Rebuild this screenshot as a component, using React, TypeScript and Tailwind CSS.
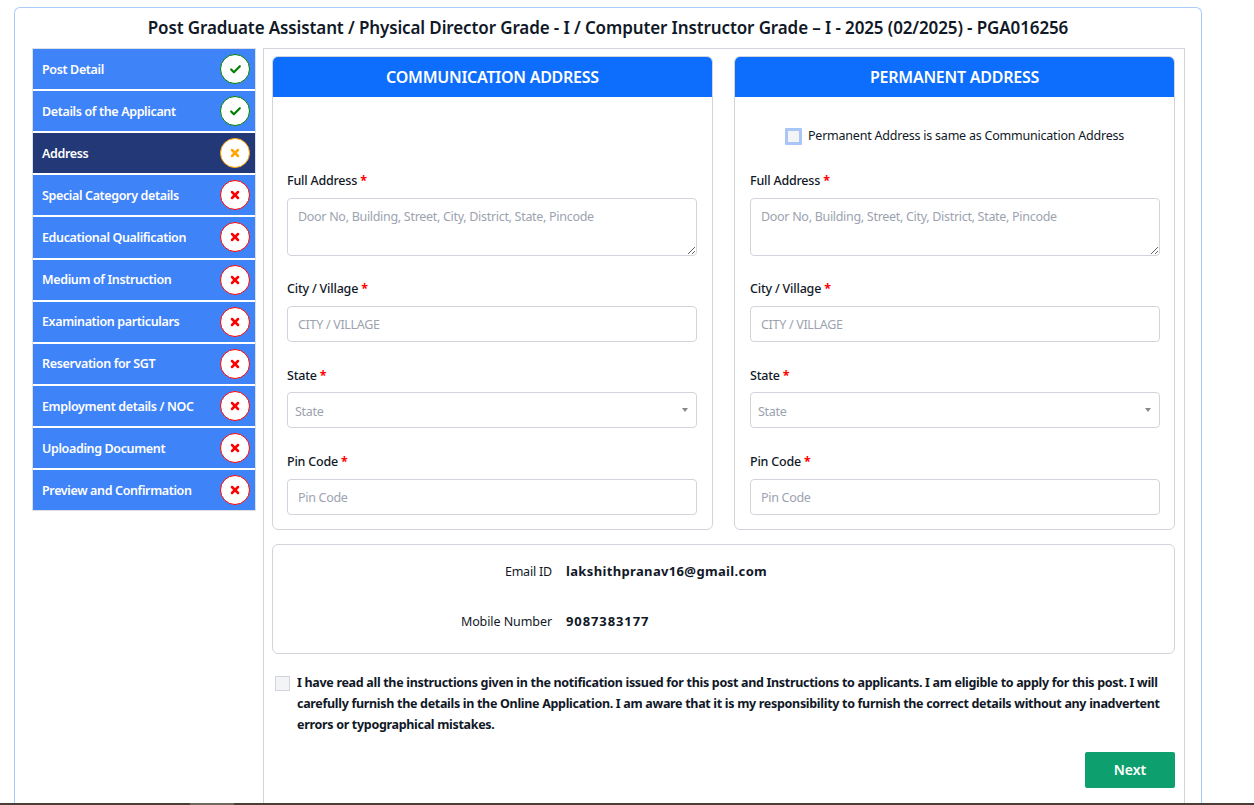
import React from "react";
import { Check, X } from "lucide-react";

const steps: { label: string; state: "done" | "active" | "todo" }[] = [
  { label: "Post Detail", state: "done" },
  { label: "Details of the Applicant", state: "done" },
  { label: "Address", state: "active" },
  { label: "Special Category details", state: "todo" },
  { label: "Educational Qualification", state: "todo" },
  { label: "Medium of Instruction", state: "todo" },
  { label: "Examination particulars", state: "todo" },
  { label: "Reservation for SGT", state: "todo" },
  { label: "Employment details / NOC", state: "todo" },
  { label: "Uploading Document", state: "todo" },
  { label: "Preview and Confirmation", state: "todo" },
];

function Step({ label, state }: { label: string; state: "done" | "active" | "todo" }) {
  return (
    <div className={`flex h-[40.12px] items-center justify-between pl-[9px] pr-[5px] ${state === "active" ? "bg-[#233876]" : "bg-[#3f83f8]"}`}>
      <span className="pt-[2px] text-[12.5px] font-semibold tracking-[-0.36px] text-white">{label}</span>
      {state === "done" && (
        <span className="flex h-[30px] w-[30px] items-center justify-center rounded-full border-[1.5px] border-[#008000] bg-white">
          <Check size={13} strokeWidth={4} className="text-[#008000]" />
        </span>
      )}
      {state === "active" && (
        <span className="flex h-[30px] w-[30px] items-center justify-center rounded-full border-[1.5px] border-[#ffa500] bg-white">
          <X size={12} strokeWidth={5} className="text-[#ffa500]" />
        </span>
      )}
      {state === "todo" && (
        <span className="flex h-[30px] w-[30px] items-center justify-center rounded-full border-[1.5px] border-[#ff0000] bg-white">
          <X size={12} strokeWidth={5} className="text-[#ff0000]" />
        </span>
      )}
    </div>
  );
}

function Label({ text }: { text: string }) {
  return (
    <div className="pt-px text-[12.5px] font-medium leading-[20px] tracking-[-0.2px] text-[#111827]">
      {text} <span className="font-bold text-[#ff0000]">*</span>
    </div>
  );
}

const inputCls =
  "block h-[36px] w-full rounded-[4px] border border-[#d1d5db] bg-white px-[10px] text-[12.5px] tracking-[-0.3px] text-[#111827] outline-none placeholder:text-[#9ca3af]";

function AddressColumn({ title, same }: { title: string; same?: boolean }) {
  return (
    <div className="flex h-[474px] flex-col rounded-[6px] border border-[#d1d5db]">
      <div className="flex h-[40px] items-center justify-center rounded-t-[5px] bg-[#0d6efd] text-[16px] font-semibold tracking-[-0.25px] text-white">
        {title}
      </div>
      <div className="flex h-[73px] items-end justify-center pb-[24px]">
        {same && (
          <div className="flex items-center gap-[6px]">
            <input type="checkbox" className="h-[17px] w-[17px] appearance-none rounded-[1px] border-[3px] border-[#a9c6f7] bg-[#f3f4f6]" />
            <span className="text-[12.5px] leading-[20px] tracking-[-0.22px] text-[#111827]">Permanent Address is same as Communication Address</span>
          </div>
        )}
      </div>
      <div className={`flex flex-col ${same ? "pl-[15px] pr-[14px]" : "pl-[14px] pr-[15px]"}`}>
        <Label text="Full Address" />
        <textarea
          className="mt-[7px] block h-[58px] w-full resize-y rounded-[4px] border border-[#d1d5db] bg-white px-[10px] py-[8px] text-[12.5px] leading-[20px] tracking-[-0.3px] outline-none placeholder:text-[#9ca3af]"
          placeholder="Door No, Building, Street, City, District, State, Pincode"
        />
        <div className="mt-[22px]"><Label text="City / Village" /></div>
        <input className={`mt-[7px] ${inputCls}`} placeholder="CITY / VILLAGE" />
        <div className="mt-[23px]"><Label text="State" /></div>
        <div className="mt-[6px] flex h-[36px] items-center justify-between rounded-[4px] border border-[#d1d5db] bg-white pl-[7px] pr-[8px] text-[12.5px] tracking-[-0.3px] text-[#9ca3af]">
          <span className="pt-[5px]">State</span>
          <svg width="6" height="4" viewBox="0 0 6 4"><path d="M0 0h6L3 4z" fill="#888888" /></svg>
        </div>
        <div className="mt-[23px]"><Label text="Pin Code" /></div>
        <input className={`mt-[7px] ${inputCls}`} placeholder="Pin Code" />
      </div>
    </div>
  );
}

function InfoRow({ label, value, labelSpacing, spacing }: { label: string; value: string; labelSpacing: string; spacing: string }) {
  return (
    <div className="flex h-[20px] items-center">
      <div className={`w-[279px] text-right text-[12.5px] text-[#111827] ${labelSpacing}`}>{label}</div>
      <div className={`ml-[14px] text-[13px] font-bold text-[#111827] ${spacing}`}>{value}</div>
    </div>
  );
}

export default function App() {
  return (
    <div className="flex h-[805px] flex-col overflow-hidden bg-white font-['Noto_Sans','Open_Sans',sans-serif]">
      <div className="flex-1 overflow-hidden pl-[14px] pt-[7px]">
        <div className="h-full w-[1188px] rounded-t-[6px] border-x border-t border-[#a9cbf9]">
          <h1 className="flex h-[40px] items-center justify-center text-[17px] font-semibold tracking-[-0.12px] text-[#111827]">
            Post Graduate Assistant / Physical Director Grade - I / Computer Instructor Grade – I - 2025 (02/2025) - PGA016256
          </h1>
          <div className="flex h-full items-start pl-[17px]">
            <div className="flex w-[224px] flex-col gap-[2px] border border-[#dcdfe6]">
              {steps.map((s) => (
                <Step key={s.label} {...s} />
              ))}
            </div>
            <div className="ml-[7px] h-full w-[922px] border border-[#d1d5db] pl-[8px] pr-[9px] pt-[7px]">
              <div className="grid grid-cols-2 gap-[21px]">
                <AddressColumn title="COMMUNICATION ADDRESS" />
                <AddressColumn title="PERMANENT ADDRESS" same />
              </div>
              <div className="mt-[14px] flex h-[110px] flex-col justify-center gap-[30px] rounded-[6px] border border-[#d1d5db] pb-[4px]">
                <InfoRow label="Email ID" value="lakshithpranav16@gmail.com" labelSpacing="tracking-[-0.2px]" spacing="tracking-[0.35px]" />
                <InfoRow label="Mobile Number" value="9087383177" labelSpacing="tracking-[-0.08px]" spacing="tracking-[0.9px]" />
              </div>
              <div className="mt-[18px] flex items-start pl-[3px]">
                <input type="checkbox" className="mt-[4px] h-[15px] w-[15px] shrink-0 appearance-none border border-[#d1d5db] bg-[#f3f4f6]" />
                <p className="ml-[7px] w-[870px] text-[12.5px] font-bold leading-[21px] tracking-[-0.31px] text-[#111827]">
                  I have read all the instructions given in the notification issued for this post and Instructions to applicants. I am eligible to apply for this post. I will carefully furnish the details in the Online Application. I am aware that it is my responsibility to furnish the correct details without any inadvertent errors or typographical mistakes.
                </p>
              </div>
              <div className="mt-[17px] flex justify-end">
                <button className="h-[36px] w-[90px] rounded-[2px] bg-[#0e9f6e] pb-[2px] text-[14px] font-semibold text-white">Next</button>
              </div>
            </div>
          </div>
        </div>
      </div>
      <div className="flex h-[2px] shrink-0 bg-[#4a3f35]">
        <div className="ml-[190px] w-[44px] bg-[#6f665c]" />
      </div>
    </div>
  );
}
